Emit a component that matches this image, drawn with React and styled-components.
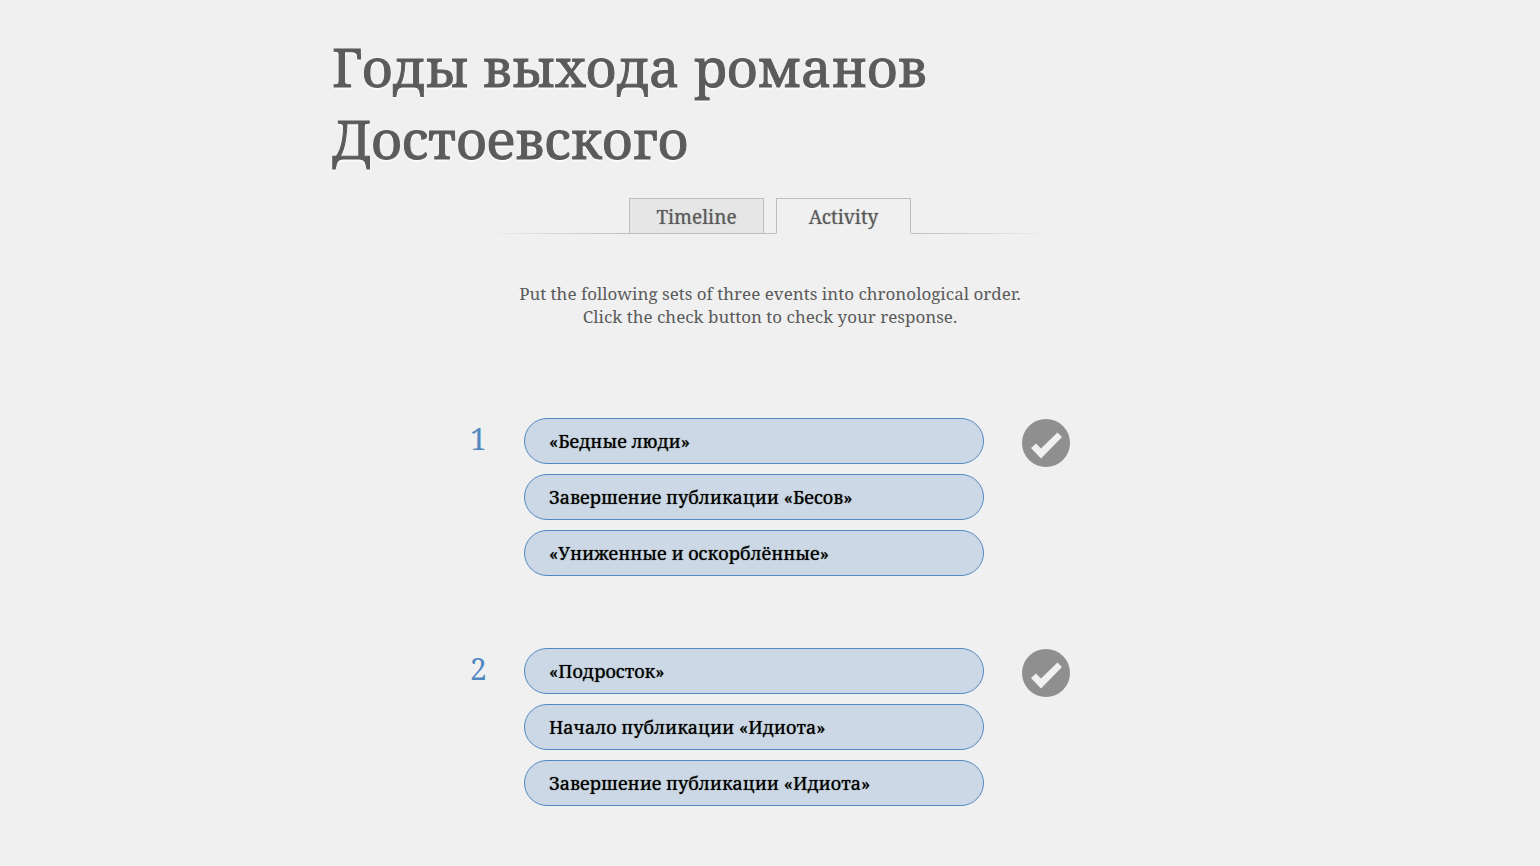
import { useState } from "react";
import styled, { createGlobalStyle } from "styled-components";

const GlobalStyle = createGlobalStyle`
  * {
    box-sizing: border-box;
  }

  body {
    margin: 0;
    background: #f0f0f0;
    color: #5b5b5b;
    font-family: "Noto Serif", "Droid Serif", "DejaVu Serif Condensed", "DejaVu Serif", serif;
  }

  button {
    font-family: inherit;
    color: inherit;
    cursor: pointer;
  }
`;

const Page = styled.main`
  max-width: 876px;
  margin: 0 auto;
  padding: 31px 0 60px;
`;
const Title = styled.h1`
  margin: 0 0 23px;
  font-size: 53px;
  font-weight: 400;
  line-height: 72px;
  text-shadow: 0 2px 2px #fff;
  -webkit-text-stroke: 1px #5b5b5b;
`;
const Tabs = styled.div`
  display: flex;
  align-items: flex-end;
  max-width: 570px;
  margin: 0 auto;

  &::before,
  &::after {
    content: "";
    flex: 1;
    height: 1px;
    background: linear-gradient(to right, transparent, #bebebe);
  }

  &::after {
    background: linear-gradient(to left, transparent, #bebebe);
  }
`;
const TabGap = styled.span`
  width: 12px;
  height: 1px;
  background: #bebebe;
`;
const Tab = styled.button`
  width: 135px;
  height: 36px;
  padding: 2px 0 0;
  border: 1px solid #bebebe;
  border-bottom-color: ${({ $active }) => ($active ? "transparent" : "#bebebe")};
  background: ${({ $active }) => ($active ? "#f0f0f0" : "#e6e6e6")};
  font-size: 19px;
  line-height: 24px;
  text-shadow: 0 0 1px #8f8f8f;
`;
const Instructions = styled.p`
  margin: 48px 0 90px;
  font-size: 17px;
  line-height: 23px;
  text-align: center;
`;
const Sets = styled.div`
  display: flex;
  flex-direction: column;
  gap: 72px;
  max-width: 600px;
  margin: 0 auto;
`;
const EventSet = styled.section`
  display: grid;
  grid-template-columns: 54px 1fr 48px;
  align-items: start;
`;
const Number = styled.h2`
  margin: 0;
  color: #5288c1;
  font-size: 30px;
  font-weight: 400;
  line-height: 42px;
`;
const Events = styled.ul`
  display: flex;
  flex-direction: column;
  gap: 10px;
  margin: 0 38px 0 0;
  padding: 0;
  list-style: none;
`;
const Event = styled.li`
  height: 46px;
  padding: 0 24px;
  border: 1px solid #5288c1;
  border-radius: 23px;
  background: #ccd8e5;
  color: #000;
  font-size: 18px;
  line-height: 44px;
  text-shadow: 0 0 1px #444;
  cursor: move;
`;
const CheckButton = styled.button`
  display: block;
  margin-top: 1px;
  padding: 0;
  border: 0;
  border-radius: 50%;
  background: none;

  svg {
    display: block;
  }
`;

const sets = [
  ["«Бедные люди»", "Завершение публикации «Бесов»", "«Униженные и оскорблённые»"],
  ["«Подросток»", "Начало публикации «Идиота»", "Завершение публикации «Идиота»"],
];

const CheckIcon = () => (
  <svg width="48" height="48" viewBox="0 0 48 48" aria-hidden="true">
    <circle cx="24" cy="24" r="24" fill="#8f8f8f" />
    <path d="M9 29l5-4.500 5 5L35.500 13.500l4.500 4.500L19 39.500z" fill="#f0f0f0" />
  </svg>
);

const App = () => {
  const [tab, setTab] = useState("Activity");

  return (
    <>
      <GlobalStyle />
      <Page>
        <Title>Годы выхода романов Достоевского</Title>
        <Tabs role="tablist">
          <Tab role="tab" aria-selected={tab === "Timeline"} $active={tab === "Timeline"} onClick={() => setTab("Timeline")}>
            Timeline
          </Tab>
          <TabGap />
          <Tab role="tab" aria-selected={tab === "Activity"} $active={tab === "Activity"} onClick={() => setTab("Activity")}>
            Activity
          </Tab>
        </Tabs>
        <Instructions>
          Put the following sets of three events into chronological order.
          <br />
          Click the check button to check your response.
        </Instructions>
        <Sets>
          {sets.map((events, i) => (
            <EventSet key={i}>
              <Number>{i + 1}</Number>
              <Events>
                {events.map(event => (
                  <Event key={event} draggable>
                    {event}
                  </Event>
                ))}
              </Events>
              <CheckButton aria-label={`Check set ${i + 1}`}>
                <CheckIcon />
              </CheckButton>
            </EventSet>
          ))}
        </Sets>
      </Page>
    </>
  );
};

export default App;
